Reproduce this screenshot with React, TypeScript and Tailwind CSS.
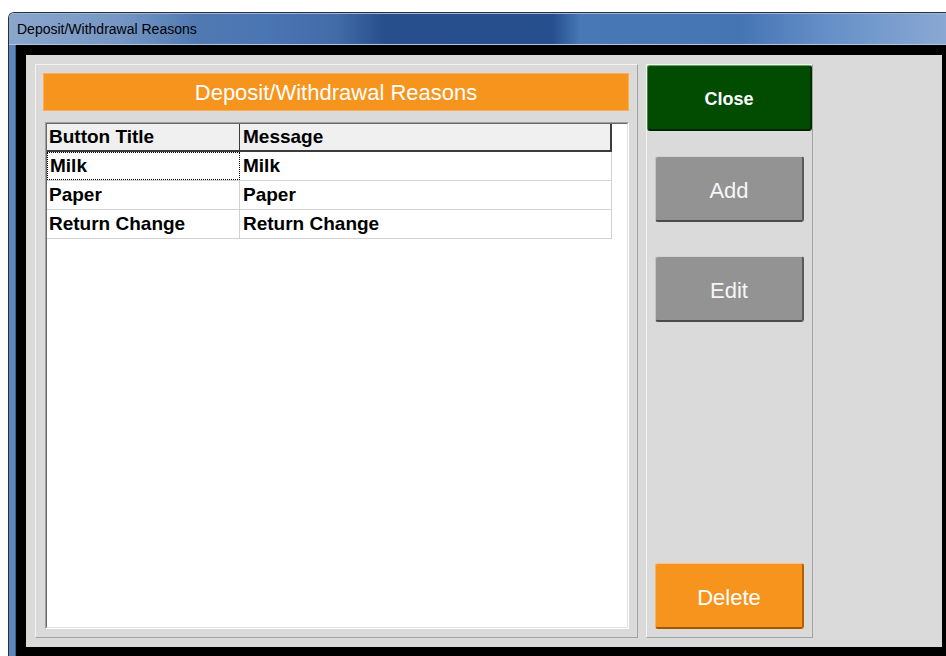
import React from 'react'

const rows = [
  { title: 'Milk', message: 'Milk' },
  { title: 'Paper', message: 'Paper' },
  { title: 'Return Change', message: 'Return Change' },
]

function GrayButton({ label }: { label: string }) {
  return (
    <button className="ml-[8px] w-[149px] h-[66px] shrink-0 rounded-[3px] bg-[#939393] border-t border-l border-t-[#d2d2d2] border-l-[#c4c4c4] border-b-2 border-r-2 border-b-[#4c4c4c] border-r-[#5a5a5a] pt-[3px] text-[22px] text-[#f6f6f6] flex items-center justify-center">
      {label}
    </button>
  )
}

export default function App() {
  return (
    <div className="w-[946px] h-[656px] bg-white pt-3 pl-2 overflow-hidden font-['Liberation_Sans',Arial,sans-serif]">
      <div className="h-full rounded-tl-[6px] border-t border-l border-[#27303c] flex flex-col overflow-hidden">
        {/* Aero title bar */}
        <div className="h-[32px] shrink-0 border-t border-t-[#9db5d8] border-b border-b-[#b0c6e2] bg-[linear-gradient(90deg,#8aa6cc_0%,#7596c4_12%,#5079b1_20%,#4a76b3_27%,#416ca8_35%,#274f8c_40%,#264f8e_58%,#4878b6_61%,#4675b3_78%,#6791c9_88%,#8aa8d3_100%)] flex items-center pl-[8px]">
          <span className="text-[14px] text-black">Deposit/Withdrawal Reasons</span>
        </div>

        <div className="flex-1 flex min-h-0">
          <div className="w-[7px] bg-[#5d86bd] border-r border-[#3b5f8f]" />
          <div className="flex-1 bg-black pl-[10px] pt-[10px] pr-[4px] pb-[9px]">
            <div className="h-full bg-[#dadada] pl-[9px] py-[9px] flex gap-[8px]">
              {/* Reasons list */}
              <div className="w-[603px] h-full border border-t-[#f3f3f3] border-l-[#f3f3f3] border-b-[#a3a3a3] border-r-[#a3a3a3] pl-[7px] pr-[8px] pt-[8px] pb-[8px] flex flex-col">
                <div className="h-[38px] shrink-0 bg-[#f7941d] border border-[#f9ad55] flex items-center justify-center text-[22px] text-white">
                  Deposit/Withdrawal Reasons
                </div>
                <div className="mt-[11px] ml-[2px] flex-1 border border-t-[#a0a0a0] border-l-[#a0a0a0] border-b-white border-r-white">
                  <div className="h-full bg-white border border-t-[#696969] border-l-[#696969] border-b-[#e3e3e3] border-r-[#e3e3e3]">
                    <div className="w-[565px] text-[19px] font-bold text-black">
                      <div className="flex h-[28px] bg-[#f0f0f0] border-b-2 border-[#3c3c3c]">
                        <div className="w-[193px] border-r border-[#3c3c3c] pl-[2px] flex items-center">Button Title</div>
                        <div className="flex-1 border-r-2 border-[#3c3c3c] pl-[3px] flex items-center">Message</div>
                      </div>
                      {rows.map((r, i) => (
                        <div key={r.title} className="flex h-[29px] border-b border-r border-[#d2d2d2]">
                          <div
                            className={`w-[193px] pl-[2px] flex items-center ${
                              i === 0 ? 'border border-dotted border-black' : 'border-r border-[#d2d2d2]'
                            }`}
                          >
                            {r.title}
                          </div>
                          <div className="flex-1 pl-[3px] flex items-center">{r.message}</div>
                        </div>
                      ))}
                    </div>
                  </div>
                </div>
              </div>

              {/* Action buttons */}
              <div className="w-[167px] h-full border border-t-[#f3f3f3] border-l-[#f3f3f3] border-b-[#a3a3a3] border-r-[#a3a3a3] pb-[8px] flex flex-col">
                <button className="w-full h-[66px] shrink-0 rounded-[3px] bg-[#014c01] border-t border-l border-t-[#5aa55a] border-l-[#3f8a3f] border-b-2 border-r-2 border-b-[#002400] border-r-[#002e00] pt-[3px] text-[18px] font-bold text-white flex items-center justify-center">
                  Close
                </button>
                <div className="h-[25px] shrink-0" />
                <GrayButton label="Add" />
                <div className="h-[34px] shrink-0" />
                <GrayButton label="Edit" />
                <div className="flex-1" />
                <button className="ml-[8px] w-[149px] h-[66px] shrink-0 rounded-[3px] bg-[#f7941d] border-t border-l border-t-[#fcc27f] border-l-[#fab266] border-b-2 border-r-2 border-b-[#a45700] border-r-[#b56100] pt-[3px] text-[22px] text-white flex items-center justify-center">
                  Delete
                </button>
              </div>
            </div>
          </div>
        </div>
      </div>
    </div>
  )
}
